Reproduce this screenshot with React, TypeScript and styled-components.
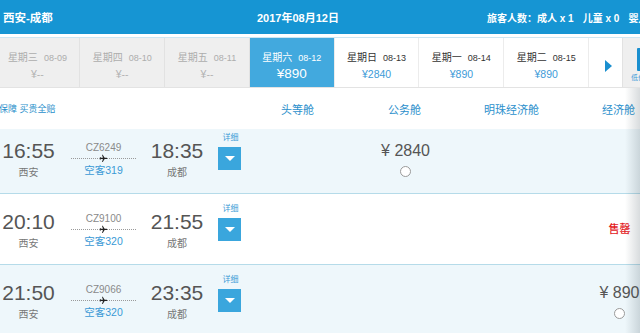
import React from "react";
import styled, { createGlobalStyle } from "styled-components";

const GlobalStyle = createGlobalStyle`
  html, body { margin: 0; padding: 0; background: #fff; }
  body {
    font-family: "Liberation Sans", "Noto Sans CJK SC", sans-serif;
    overflow: hidden;
  }
  * { box-sizing: border-box; }
`;

const Page = styled.div`
  width: 640px;
  height: 333px;
  overflow: hidden;
  background: #fff;
  white-space: nowrap;
`;

const TopBar = styled.div`
  height: 34px;
  background: #1695d3;
  color: #fff;
  display: flex;
  align-items: center;
  padding-left: 3px;
  margin-bottom: 3px;
  font-weight: bold;
`;

const Title = styled.div`
  flex: 0 0 254px;
  font-size: 11.5px;
`;

const DateText = styled.div`
  flex: 0 0 230px;
  font-size: 11px;
`;

const Passengers = styled.div`
  display: flex;
  font-size: 10px;
  gap: 9px;
`;

const Tabs = styled.div`
  display: flex;
  height: 51px;
  margin-left: -4.5px;
  border-top: 1px solid #cde6f2;
  border-bottom: 1px solid #e3e3e3;
`;

type TabState = "past" | "active" | "future";

const Tab = styled.div<{ $state: TabState }>`
  flex: 0 0 84.8px;
  display: flex;
  flex-direction: column;
  align-items: center;
  padding-top: 13px;
  border-right: 1px solid ${(p) => (p.$state === "past" ? "#e2e2e2" : "#ececec")};
  background: ${(p) =>
    p.$state === "past" ? "#efefef" : p.$state === "active" ? "#42a9de" : "#fff"};
  color: ${(p) =>
    p.$state === "past" ? "#adadad" : p.$state === "active" ? "#fff" : "#333"};
`;

const TabDay = styled.div`
  line-height: 14px;
  font-size: 10px;
  display: flex;
  align-items: baseline;
`;

const TabDate = styled.span`
  font-size: 9px;
  margin-left: 6px;
`;

const TabPrice = styled.div<{ $state: TabState }>`
  margin-top: 1px;
  line-height: 16px;
  font-size: ${(p) => (p.$state === "active" ? "13.5px" : "10.5px")};
  color: ${(p) =>
    p.$state === "past" ? "#b3b3b3" : p.$state === "active" ? "#fff" : "#3d9bd8"};
`;

const ArrowTab = styled.div`
  flex: 0 0 34px;
  display: flex;
  align-items: center;
  justify-content: center;
  padding-top: 6px;
  padding-left: 6px;
  border-right: 1px solid #e2e2e2;
  background: #fff;
`;

const RightArrow = styled.div`
  width: 0;
  height: 0;
  border-top: 6px solid transparent;
  border-bottom: 6px solid transparent;
  border-left: 7px solid #1a8fcf;
`;

const CalTab = styled.div`
  flex: 0 0 40px;
  background: #efefef;
  display: flex;
  flex-direction: column;
  padding-top: 10px;
`;

const CalIcon = styled.div`
  width: 18px;
  height: 23px;
  margin-left: 14px;
  background: #1a8fcf;
  border-radius: 1px;
`;

const CalText = styled.div`
  margin-left: 8px;
  margin-top: 2px;
  font-size: 7px;
  line-height: 9px;
  color: #3d9bd8;
`;

const Body = styled.div`
  position: relative;
  width: 640px;
  overflow: hidden;
  &::after {
    content: "";
    position: absolute;
    top: 0;
    right: 0;
    bottom: 0;
    width: 15px;
    background: linear-gradient(90deg, rgba(0, 0, 0, 0), rgba(40, 60, 70, 0.18));
    pointer-events: none;
  }
`;

const HeaderRow = styled.div`
  display: flex;
  align-items: center;
  width: 673px;
  height: 41px;
`;

const Guarantee = styled.div`
  flex: 0 0 245px;
  margin-left: -1px;
  font-size: 9px;
  color: #2a8fcb;
`;

const ColHead = styled.div`
  flex: 0 0 107px;
  text-align: center;
  font-size: 11px;
  color: #2b8fcc;
`;

const FlightRow = styled.div<{ $first?: boolean; $alt?: boolean }>`
  display: flex;
  align-items: flex-start;
  width: 673px;
  box-sizing: content-box;
  height: 64px;
  padding-top: ${(p) => (p.$first ? 0 : 6)}px;
  border-bottom: 1px solid #b5dbe9;
  background: ${(p) => (p.$alt ? "#eef7fb" : "#fff")};
`;

const Info = styled.div`
  flex: 0 0 245px;
  display: grid;
  grid-template-columns: 57px 65px 54px 23px;
  column-gap: 14px;
  align-items: start;
`;

const Station = styled.div`
  display: flex;
  flex-direction: column;
  align-items: center;
  padding-top: 10px;
`;

const Time = styled.div`
  font-size: 21px;
  line-height: 24px;
  color: #555;
`;

const City = styled.div`
  margin-top: 4px;
  font-size: 10px;
  line-height: 12px;
  color: #777;
`;

const Mid = styled.div`
  display: flex;
  flex-direction: column;
  align-items: center;
  padding-top: 13px;
`;

const FlightNo = styled.div`
  font-size: 10px;
  line-height: 12px;
  color: #8a8a8a;
`;

const Route = styled.div`
  align-self: stretch;
  height: 9px;
  display: flex;
  align-items: center;
  justify-content: center;
  background-image: repeating-linear-gradient(90deg, #9a9a9a 0 1px, transparent 1px 2px);
  background-size: 100% 1px;
  background-position: center;
  background-repeat: no-repeat;
`;

const Model = styled.div`
  font-size: 10.5px;
  line-height: 14px;
  color: #3a9ad6;
`;

const Detail = styled.div`
  display: flex;
  flex-direction: column;
  align-items: center;
  padding-top: 4px;
`;

const DetailLabel = styled.div`
  font-size: 8px;
  line-height: 10px;
  color: #3a9ad6;
  margin-left: 2px;
`;

const DetailButton = styled.div`
  margin-top: 4px;
  width: 23px;
  height: 23px;
  background: #3aa6dd;
  display: flex;
  align-items: center;
  justify-content: center;
`;

const DownArrow = styled.div`
  width: 0;
  height: 0;
  border-left: 5px solid transparent;
  border-right: 5px solid transparent;
  border-top: 5px solid #fff;
`;

const PriceCell = styled.div`
  flex: 0 0 107px;
  display: flex;
  flex-direction: column;
  align-items: center;
  padding-top: 12px;
`;

const Price = styled.div`
  font-size: 16px;
  line-height: 20px;
  color: #555;
`;

const Radio = styled.div`
  margin-top: 5px;
  width: 11px;
  height: 11px;
  border-radius: 50%;
  border: 1px solid #9a9a9a;
  background: #fff;
`;

const SoldOut = styled.div`
  margin-top: 10px;
  font-size: 11px;
  line-height: 14px;
  color: #e3201c;
  font-weight: 500;
`;

const Plane = () => (
  <svg width="9" height="9" viewBox="0 0 24 24" style={{ transform: "rotate(90deg)" }}>
    <path
      fill="#222"
      d="M21 16v-2l-8-5V3.5c0-.83-.67-1.5-1.5-1.5S10 2.67 10 3.5V9l-8 5v2l8-2.5V19l-2 1.5V22l3.5-1 3.5 1v-1.5L13 19v-5.5l8 2.5z"
    />
  </svg>
);

const tabs: { day: string; date: string; price: string; state: TabState }[] = [
  { day: "星期三", date: "08-09", price: "¥--", state: "past" },
  { day: "星期四", date: "08-10", price: "¥--", state: "past" },
  { day: "星期五", date: "08-11", price: "¥--", state: "past" },
  { day: "星期六", date: "08-12", price: "¥890", state: "active" },
  { day: "星期日", date: "08-13", price: "¥2840", state: "future" },
  { day: "星期一", date: "08-14", price: "¥890", state: "future" },
  { day: "星期二", date: "08-15", price: "¥890", state: "future" },
];

type Fare = { kind: "price"; value: string } | { kind: "soldout" } | null;

const flights: {
  dep: string;
  arr: string;
  no: string;
  model: string;
  fares: Fare[];
}[] = [
  {
    dep: "16:55",
    arr: "18:35",
    no: "CZ6249",
    model: "空客319",
    fares: [null, { kind: "price", value: "¥ 2840" }, null, null],
  },
  {
    dep: "20:10",
    arr: "21:55",
    no: "CZ9100",
    model: "空客320",
    fares: [null, null, null, { kind: "soldout" }],
  },
  {
    dep: "21:50",
    arr: "23:35",
    no: "CZ9066",
    model: "空客320",
    fares: [null, null, null, { kind: "price", value: "¥ 890" }],
  },
];

export default function App() {
  return (
    <>
      <GlobalStyle />
      <Page>
        <TopBar>
          <Title>西安-成都</Title>
          <DateText>2017年08月12日</DateText>
          <Passengers>
            <span>旅客人数：成人 x 1</span>
            <span>儿童 x 0</span>
            <span>婴儿 x 0</span>
          </Passengers>
        </TopBar>
        <Tabs>
          {tabs.map((t) => (
            <Tab key={t.date} $state={t.state}>
              <TabDay>
                {t.day}
                <TabDate>{t.date}</TabDate>
              </TabDay>
              <TabPrice $state={t.state}>{t.price}</TabPrice>
            </Tab>
          ))}
          <ArrowTab>
            <RightArrow />
          </ArrowTab>
          <CalTab>
            <CalIcon />
            <CalText>低价日历</CalText>
          </CalTab>
        </Tabs>
        <Body>
          <HeaderRow>
            <Guarantee>保障 买贵全赔</Guarantee>
            <ColHead>头等舱</ColHead>
            <ColHead>公务舱</ColHead>
            <ColHead>明珠经济舱</ColHead>
            <ColHead>经济舱</ColHead>
          </HeaderRow>
          {flights.map((f, i) => (
            <FlightRow key={f.no} $first={i === 0} $alt={i !== 1}>
              <Info>
                <Station>
                  <Time>{f.dep}</Time>
                  <City>西安</City>
                </Station>
                <Mid>
                  <FlightNo>{f.no}</FlightNo>
                  <Route>
                    <Plane />
                  </Route>
                  <Model>{f.model}</Model>
                </Mid>
                <Station>
                  <Time>{f.arr}</Time>
                  <City>成都</City>
                </Station>
                <Detail>
                  <DetailLabel>详细</DetailLabel>
                  <DetailButton>
                    <DownArrow />
                  </DetailButton>
                </Detail>
              </Info>
              {f.fares.map((fare, j) => (
                <PriceCell key={j}>
                  {fare && fare.kind === "price" && (
                    <>
                      <Price>{fare.value}</Price>
                      <Radio />
                    </>
                  )}
                  {fare && fare.kind === "soldout" && <SoldOut>售罄</SoldOut>}
                </PriceCell>
              ))}
            </FlightRow>
          ))}
        </Body>
      </Page>
    </>
  );
}
